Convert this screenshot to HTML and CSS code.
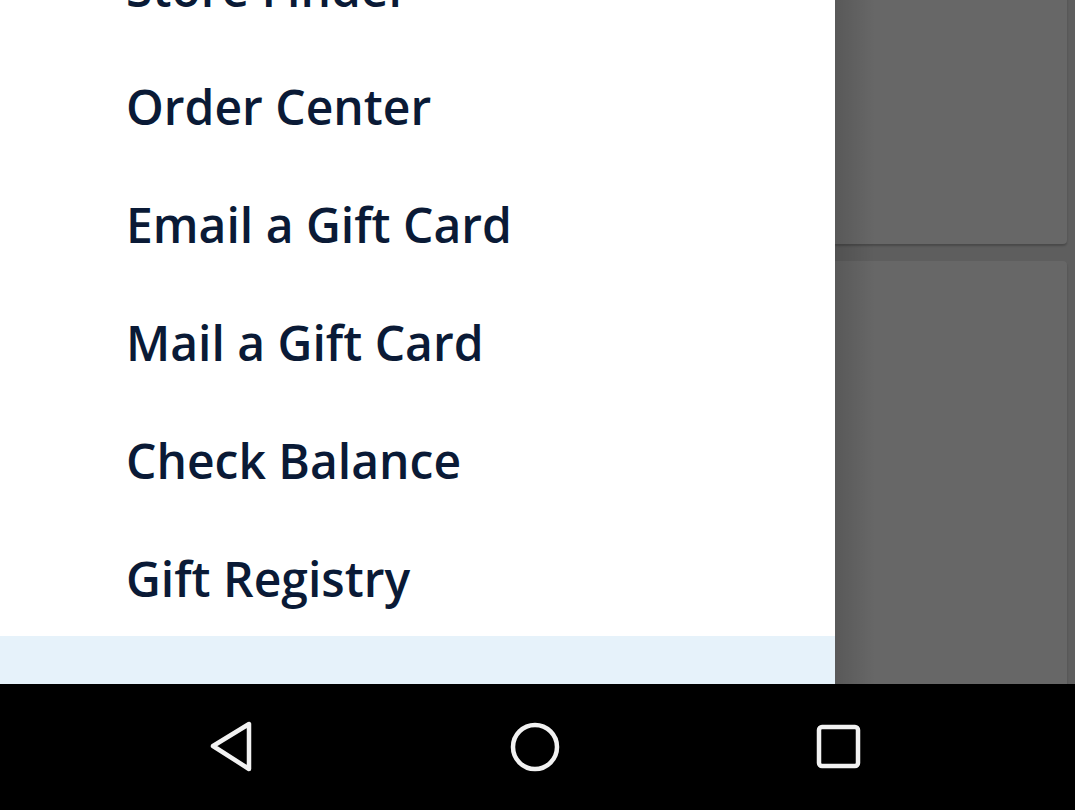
FILE: index.html
```html
<!DOCTYPE html>
<html lang="en">
<head>
<meta charset="utf-8">
<title>Menu</title>
<link rel="stylesheet" href="styles.css">
</head>
<body>
<div class="screen">
  <div class="main">
    <nav class="drawer">
      <ul class="menu">
        <li class="item">Store Finder</li>
        <li class="item">Order Center</li>
        <li class="item">Email a Gift Card</li>
        <li class="item">Mail a Gift Card</li>
        <li class="item">Check Balance</li>
        <li class="item">Gift Registry</li>
        <li class="item active"></li>
      </ul>
    </nav>
    <div class="scrim">
      <div class="shade"></div>
      <div class="cards">
        <div class="card card-top"></div>
        <div class="card card-bottom"></div>
      </div>
    </div>
  </div>
  <div class="navbar">
    <svg class="nav-icon" width="60" height="60" viewBox="0 0 60 60">
      <path d="M13 29 L49 7 L49 52 Z" fill="none" stroke="#f2f2f2" stroke-width="4.5" stroke-linejoin="round"/>
    </svg>
    <svg class="nav-icon" width="60" height="60" viewBox="0 0 60 60">
      <circle cx="30" cy="30" r="22" fill="none" stroke="#f2f2f2" stroke-width="4.5"/>
    </svg>
    <svg class="nav-icon" width="60" height="60" viewBox="0 0 60 60">
      <rect x="10" y="10" width="39" height="39" rx="3" fill="none" stroke="#f2f2f2" stroke-width="4.5"/>
    </svg>
  </div>
</div>
</body>
</html>
```

FILE: styles.css
```css
html, body {
  margin: 0;
  padding: 0;
  background: #000;
}

.screen {
  width: 1075px;
  height: 810px;
  display: flex;
  flex-direction: column;
  overflow: hidden;
  font-family: "Open Sans", "Noto Sans", sans-serif;
}

.main {
  height: 684px;
  display: flex;
  flex-direction: row;
  overflow: hidden;
}

.drawer {
  width: 835px;
  flex: none;
  background: #ffffff;
  overflow: hidden;
}

.menu {
  list-style: none;
  margin: -70px 0 0 0;
  padding: 0;
}

.item {
  height: 118px;
  line-height: 118px;
  padding-left: 126px;
  font-size: 48px;
  font-weight: 600;
  color: #0a1a36;
  white-space: nowrap;
}

.item:nth-child(6) {
  height: 116px;
}

.item.active {
  background: #e6f2fa;
  height: 120px;
}

.scrim {
  flex: 1;
  position: relative;
  background: #5e5e5e;
  overflow: hidden;
}

.shade {
  position: absolute;
  top: 0;
  left: 0;
  bottom: 0;
  width: 40px;
  background: linear-gradient(to right, rgba(0,0,0,0.14), rgba(0,0,0,0));
  z-index: 2;
}

.cards {
  display: flex;
  flex-direction: column;
  gap: 17px;
  padding-right: 8px;
  margin-top: -20px;
}

.card {
  background: #676767;
  border-radius: 0 0 4px 0;
  box-shadow: 0 2px 2px rgba(0,0,0,0.22);
}

.card-top {
  height: 264px;
}

.card-bottom {
  height: 500px;
  border-radius: 0 4px 0 0;
}

.navbar {
  height: 126px;
  background: #000;
  display: flex;
  align-items: center;
}

.nav-icon:nth-child(1) {
  margin-left: 200px;
}

.nav-icon:nth-child(2) {
  margin-left: 245px;
}

.nav-icon:nth-child(3) {
  margin-left: 244px;
}
```
